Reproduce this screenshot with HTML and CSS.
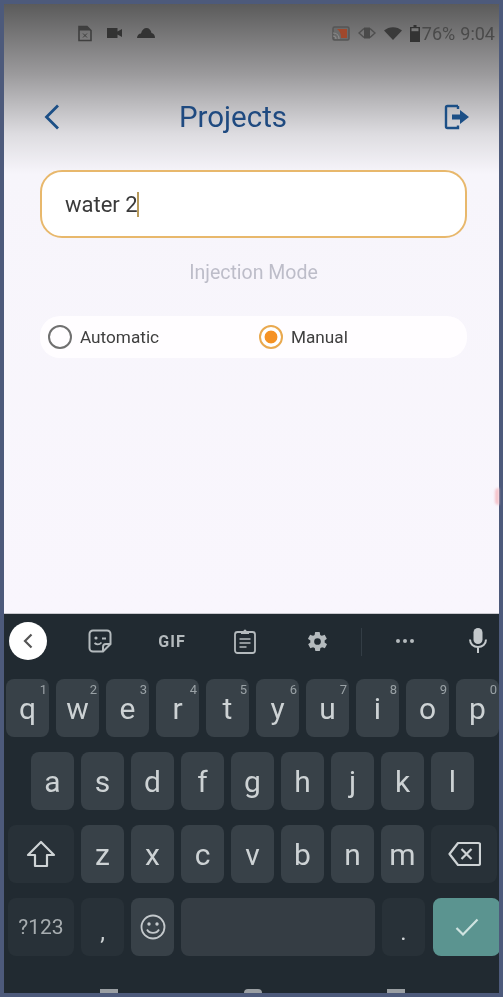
FILE: index.html
```html
<!DOCTYPE html>
<html lang="en">
<head>
    <meta charset="UTF-8">
    <meta name="viewport" content="width=device-width, initial-scale=1.0">
    <title>Projects</title>
    <link rel="stylesheet" href="styles.css">
</head>
<body>
    <div class="screen">
        <!-- app -->
        <div class="app">
            <div class="status-bar">
                <div class="status-left">
                    <svg width="14" height="17" viewBox="0 0 14 17"><path d="M1 1.500h8l4 4v10H1z" fill="none" stroke="#3f3f3f" stroke-width="1.600"/><path d="M1 1.500h8l4 4H1z" fill="#3f3f3f"/><path d="M5 8.500l4 4M9 8.500l-4 4" stroke="#3f3f3f" stroke-width="1"/></svg>
                    <svg width="15" height="10" viewBox="0 0 15 10"><path d="M0 0h10.500v3.500L15 1v8l-4.500-2.500V10H0z" fill="#333"/></svg>
                    <svg width="18" height="10" viewBox="0 0 18 10"><path d="M0 10c0-3 2-4.500 4-4.600C5 2 7 0 9.500 0S14 2 14.500 5c2 .3 3.500 2 3.500 5z" fill="#333"/></svg>
                </div>
                <div class="status-right">
                    <svg width="18" height="15" viewBox="0 0 18 15"><rect x="1" y="1" width="16" height="13" rx="1.500" fill="#6a6a6a" stroke="#555" stroke-width="1.500"/><path d="M5 3h10v9H9C9 8 8 5 5 3z" fill="#a0482c"/><path d="M1 7c4 0 6 3 6 6M1 10c2 0 3 1.500 3 3" fill="none" stroke="#8a8a8a" stroke-width="1.200"/></svg>
                    <svg class="vibrate" width="18" height="14" viewBox="0 0 18 14"><path d="M6 1.500h6v11H6z" fill="#4a4a4a"/><path d="M6 2.500L1 7l5 4.500M12 2.500L17 7l-5 4.500" fill="none" stroke="#4f4f4f" stroke-width="1.500"/></svg>
                    <svg class="wifi" width="18" height="13" viewBox="0 0 18 13"><path d="M0 3.500C5-1 13-1 18 3.500L9 13z" fill="#3a3a3a"/></svg>
                    <svg class="battery" width="10" height="17" viewBox="0 0 10 17"><path d="M3.500 0h3v2H10v15H0V2h3.500z" fill="#333"/><path d="M1.500 3.200h7v3h-7z" fill="#777"/></svg>
                    <span class="status-text">76%</span>
                    <span class="status-text status-time">9:04</span>
                </div>
            </div>

            <div class="header">
                <svg width="16" height="26" viewBox="0 0 16 26"><path d="M14 1.500L2.500 13 14 24.500" fill="none" stroke="#1c4f86" stroke-width="2.800"/></svg>
                <h1>Projects</h1>
                <svg width="26" height="26" viewBox="0 0 26 26"><path d="M14 2H3.500A1.500 1.500 0 0 0 2 3.500v19A1.500 1.500 0 0 0 3.500 24H14v-2.500M14 2v3" fill="none" stroke="#1c4f86" stroke-width="2.400"/><path d="M8 10.500h8V6l9 7-9 7v-4.500H8z" fill="#1c4f86"/></svg>
            </div>

            <div class="name-input">
                <span>water 2</span><span class="caret"></span>
            </div>

            <div class="mode-label">Injection Mode</div>

            <div class="mode-options">
                <div class="mode-option">
                    <span class="radio"></span>
                    <span>Automatic</span>
                </div>
                <div class="mode-option">
                    <span class="radio radio-on"></span>
                    <span>Manual</span>
                </div>
            </div>
            <span class="edge-blob"></span>
        </div>

        <!-- keyboard -->
        <div class="keyboard">
            <div class="toolbar">
                <div class="tool-back">
                    <svg width="10" height="16" viewBox="0 0 10 16"><path d="M8.500 1.500L2 8l6.500 6.500" fill="none" stroke="#555" stroke-width="2.200"/></svg>
                </div>
                <div class="tool tool-sticker">
                    <svg width="24" height="24" viewBox="0 0 24 24"><path d="M5 1.500h14A3.500 3.500 0 0 1 22.500 5v10L15 22.500H5A3.500 3.500 0 0 1 1.500 19V5A3.500 3.500 0 0 1 5 1.500z" fill="none" stroke="#b4babd" stroke-width="2"/><path d="M15 22.500V18a3 3 0 0 1 3-3h4.500" fill="none" stroke="#b4babd" stroke-width="2"/><circle cx="8" cy="9" r="1.600" fill="#b4babd"/><path d="M14 9.500h4M6.500 14c2.500 2 5 1.600 7-.5" fill="none" stroke="#b4babd" stroke-width="1.800"/></svg>
                </div>
                <div class="tool tool-gif">GIF</div>
                <div class="tool">
                    <svg width="22" height="26" viewBox="0 0 22 26"><rect x="1" y="4" width="20" height="21" rx="2.500" fill="none" stroke="#b4babd" stroke-width="1.800"/><path d="M7 6V3h2.500a1.500 1.500 0 0 1 3 0H15v3z" fill="#b4babd"/><path d="M5.500 11h11M5.500 15h11M5.500 19h7" stroke="#b4babd" stroke-width="1.700"/></svg>
                </div>
                <div class="tool">
                    <svg width="23" height="23" viewBox="0 0 24 24"><path fill="#b4babd" d="M19.400 13c.1-.3.1-.7.1-1s0-.7-.1-1l2.100-1.600c.2-.1.200-.4.100-.6l-2-3.500c-.1-.2-.4-.3-.6-.2l-2.500 1c-.5-.4-1.100-.7-1.700-1l-.4-2.600c0-.3-.2-.5-.5-.5h-4c-.3 0-.5.200-.5.500l-.4 2.600c-.6.300-1.200.6-1.700 1l-2.500-1c-.2-.1-.5 0-.6.200l-2 3.500c-.1.200-.1.500.1.600L4.600 11c-.1.300-.1.700-.1 1s0 .7.100 1l-2.100 1.600c-.2.100-.2.400-.1.600l2 3.500c.1.200.4.300.6.200l2.500-1c.5.400 1.100.7 1.700 1l.4 2.600c0 .3.200.5.500.5h4c.3 0 .5-.2.500-.5l.4-2.600c.6-.3 1.200-.6 1.700-1l2.500 1c.2.100.5 0 .6-.2l2-3.500c.1-.2.100-.5-.1-.6zM12 15.500a3.500 3.500 0 1 1 0-7 3.500 3.500 0 0 1 0 7z"/></svg>
                </div>
                <span class="tool-divider"></span>
                <div class="tool tool-more"><i></i><i></i><i></i></div>
                <div class="tool tool-mic">
                    <svg width="18" height="26" viewBox="0 0 18 26"><rect x="4.500" y="0" width="9" height="16" rx="4.500" fill="#c4c9cc"/><path d="M1 11.500c0 4.500 3.500 7.500 8 7.500s8-3 8-7.500M9 19v6" fill="none" stroke="#c4c9cc" stroke-width="2"/></svg>
                </div>
            </div>

            <div class="key-row row-top">
                <div class="key">q<sup>1</sup></div>
                <div class="key">w<sup>2</sup></div>
                <div class="key">e<sup>3</sup></div>
                <div class="key">r<sup>4</sup></div>
                <div class="key">t<sup>5</sup></div>
                <div class="key">y<sup>6</sup></div>
                <div class="key">u<sup>7</sup></div>
                <div class="key">i<sup>8</sup></div>
                <div class="key">o<sup>9</sup></div>
                <div class="key">p<sup>0</sup></div>
            </div>
            <div class="key-row row-home">
                <div class="key">a</div>
                <div class="key">s</div>
                <div class="key">d</div>
                <div class="key">f</div>
                <div class="key">g</div>
                <div class="key">h</div>
                <div class="key">j</div>
                <div class="key">k</div>
                <div class="key">l</div>
            </div>
            <div class="key-row row-shift">
                <div class="key key-wide key-dark">
                    <svg width="30" height="28" viewBox="0 0 30 28"><path d="M15 2L2 15h7v11h12V15h7z" fill="none" stroke="#ced3d5" stroke-width="2.200" stroke-linejoin="round"/></svg>
                </div>
                <div class="key">z</div>
                <div class="key">x</div>
                <div class="key">c</div>
                <div class="key">v</div>
                <div class="key">b</div>
                <div class="key">n</div>
                <div class="key">m</div>
                <div class="key key-wide key-dark">
                    <svg width="33" height="26" viewBox="0 0 33 26"><path d="M10 2h20.500a1.500 1.500 0 0 1 1.500 1.500v19a1.500 1.500 0 0 1-1.500 1.500H10L1.500 13z" fill="none" stroke="#ced3d5" stroke-width="2.200" stroke-linejoin="round"/><path d="M13.500 8l10 10M23.500 8l-10 10" stroke="#ced3d5" stroke-width="2.200"/></svg>
                </div>
            </div>
            <div class="key-row row-bottom">
                <div class="key key-wide key-dark key-sym">?123</div>
                <div class="key key-dark key-punct">,</div>
                <div class="key">
                    <svg width="26" height="26" viewBox="0 0 26 26"><circle cx="13" cy="13" r="11.500" fill="none" stroke="#c4c9cc" stroke-width="1.800"/><circle cx="9" cy="10" r="1.700" fill="#c4c9cc"/><circle cx="17" cy="10" r="1.700" fill="#c4c9cc"/><path d="M7 15.500c2.500 4.500 9.500 4.500 12 0" fill="none" stroke="#c4c9cc" stroke-width="1.800"/></svg>
                </div>
                <div class="key key-space"></div>
                <div class="key key-dark key-punct">.</div>
                <div class="key key-wide key-enter">
                    <svg width="24" height="18" viewBox="0 0 24 18"><path d="M1.500 10l6.500 6.500L22.500 1.500" fill="none" stroke="#cfe3e0" stroke-width="2.200"/></svg>
                </div>
            </div>
            <div class="nav-hints">
                <span class="nav-hint"></span>
                <span class="nav-hint nav-round"></span>
                <span class="nav-hint"></span>
            </div>
        </div>
    </div>
</body>
</html>
```

FILE: styles.css
```css
/* page */
body {
    margin: 0;
    height: 997px;
    overflow: hidden;
    background-color: #4d5a7b;
    font-family: Roboto, "Liberation Sans", sans-serif;
}

.screen {
    margin: 4px 4px 0;
    height: 989px;
    display: flex;
    flex-direction: column;
    filter: blur(0.5px);
}

/* app */
.app {
    position: relative;
    height: 610px;
    box-sizing: border-box;
    padding: 0 32px 0 36px;
    background: linear-gradient(#5b5b5b 0, #9b9a9c 70px, #dddce0 130px, #f7f5fb 170px, #f9f6fd 100%);
    border-bottom: 1px solid #c9c9cf;
}

.status-bar {
    height: 58px;
    margin: 0 -32px 0 -36px;
    display: flex;
    justify-content: space-between;
    align-items: center;
    padding: 0 4px 0 74px;
}

.status-left {
    display: flex;
    align-items: center;
    gap: 15px;
}

.status-right {
    display: flex;
    align-items: center;
    gap: 8px;
}

.status-text {
    font-size: 18px;
    color: #4a4a4a;
}

.status-time {
    margin-left: -3px;
}

.battery {
    margin-right: -6px;
}

.header {
    display: flex;
    justify-content: space-between;
    align-items: center;
    height: 54px;
    margin: 28px -3px 0 4px;
}

.header h1 {
    margin: 0 0 0 -38px;
    font-size: 29.500px;
    font-weight: 400;
    color: #1f4a80;
}

.name-input {
    margin-top: 26px;
    height: 68px;
    box-sizing: border-box;
    display: flex;
    align-items: center;
    padding-left: 23px;
    background-color: #fff;
    border: 2px solid #e8b86c;
    border-radius: 22px;
    font-size: 22px;
    color: #3a3a3a;
}

.caret {
    width: 2px;
    height: 25px;
    margin-left: -1px;
    background-color: #b89a5a;
}

.mode-label {
    margin-top: 23px;
    text-align: center;
    font-size: 19.500px;
    line-height: 24px;
    color: #bdbdc9;
}

.mode-options {
    margin-top: 31px;
    height: 42px;
    display: flex;
    align-items: center;
    padding-left: 8px;
    background-color: #fffdff;
    border-radius: 20px;
    font-size: 17.200px;
    color: #3f3f3f;
}

.mode-option {
    width: 213px;
    display: flex;
    align-items: center;
    gap: 8px;
}

.mode-option:first-child {
    width: 216px;
}

.radio {
    width: 24px;
    height: 24px;
    box-sizing: border-box;
    border: 2px solid #707070;
    border-radius: 50%;
}

.radio-on {
    border-color: #e9a94f;
    background: radial-gradient(circle, #f59223 0, #f59223 6px, #fff 6.800px);
}

.edge-blob {
    position: absolute;
    right: 0;
    top: 484px;
    width: 4px;
    height: 17px;
    border-radius: 10px 0 0 10px;
    background-color: #f5c3cb;
    filter: blur(1px);
}

/* keyboard */
.keyboard {
    flex: 1;
    background-color: #212a31;
    overflow: hidden;
}

.toolbar {
    position: relative;
    height: 65px;
}

.tool-back {
    position: absolute;
    left: 5px;
    top: 8px;
    width: 38px;
    height: 38px;
    border-radius: 50%;
    background-color: #fff;
    display: flex;
    justify-content: center;
    align-items: center;
}

.tool {
    position: absolute;
    top: 13px;
    left: 228px;
    width: 26px;
    height: 28px;
    display: flex;
    justify-content: center;
    align-items: center;
}

.tool:nth-child(2) { left: 83px; }
.tool:nth-child(3) { left: 155px; }
.tool:nth-child(4) { left: 228px; }
.tool:nth-child(5) { left: 300px; }
.tool:nth-child(7) { left: 388px; }
.tool:nth-child(8) { left: 461px; }

.tool-gif {
    font-size: 16px;
    font-weight: 700;
    letter-spacing: 1px;
    color: #b4babd;
}

.tool-more {
    gap: 3px;
}

.tool-more i {
    width: 4px;
    height: 4px;
    border-radius: 50%;
    background-color: #b4babd;
}

.tool-divider {
    position: absolute;
    left: 357px;
    top: 14px;
    width: 1px;
    height: 28px;
    background-color: #333d45;
}

.key-row {
    display: flex;
    gap: 7px;
    height: 58px;
    margin-bottom: 15px;
}

.row-top { padding-left: 2px; }
.row-home { padding-left: 27px; }
.row-shift { padding-left: 4px; }
.row-bottom { padding-left: 4px; }

.key {
    position: relative;
    flex: none;
    width: 43px;
    display: flex;
    justify-content: center;
    align-items: center;
    border-radius: 8px;
    background-color: #384148;
    font-size: 30px;
    color: #cdd2d4;
}

.key sup {
    position: absolute;
    top: 4px;
    right: 2px;
    font-size: 13px;
    line-height: 14px;
    color: #9aa2a6;
}

.key-wide {
    width: 66px;
}

.key-dark {
    background-color: #283138;
}

.key-sym {
    font-size: 21px;
    color: #a7adb0;
}

.key-punct {
    align-items: flex-end;
    padding-bottom: 12px;
    box-sizing: border-box;
    font-size: 24px;
    line-height: 24px;
}

.key-space {
    width: 194px;
    background-color: #353d44;
}

.key-enter {
    width: 67px;
    margin-left: 1px;
    background-color: #5b9490;
}

.nav-hints {
    display: flex;
    justify-content: space-between;
    margin-top: 33px;
    padding: 0 94px 0 96px;
}

.nav-hint {
    width: 18px;
    height: 4px;
    background-color: #9a9fa3;
}

.nav-round {
    border-radius: 9px 9px 0 0;
}
```
